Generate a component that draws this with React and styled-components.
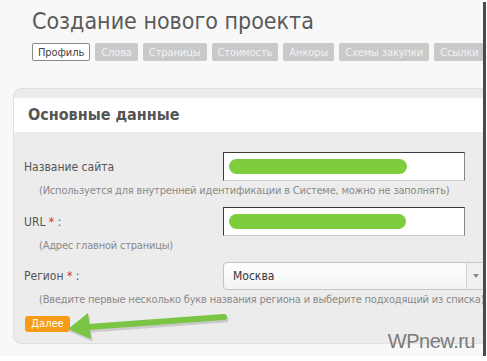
import React from 'react'
import styled, { createGlobalStyle } from 'styled-components'

const GlobalStyle = createGlobalStyle`
  html, body {
    margin: 0;
    padding: 0;
    background: #ffffff;
  }
  body {
    font-family: "DejaVu Sans Condensed", "DejaVu Sans", Verdana, sans-serif;
  }
`

const tabs = ['Слова', 'Страницы', 'Стоимость', 'Анкоры', 'Схемы закупки', 'Ссылки']

export default function App() {
  return (
    <>
      <GlobalStyle />
      <Frame>
        <Title>Создание нового проекта</Title>
        <Tabs>
          <Tab active>Профиль</Tab>
          {tabs.map(t => <Tab key={t}>{t}</Tab>)}
        </Tabs>

        <Panel>
          <PanelHead>Основные данные</PanelHead>
          <PanelBody>
            <Row>
              <Label>Название сайта</Label>
              <Input><Marker style={{width: 178}} /></Input>
            </Row>
            <Hint>(Используется для внутренней идентификации в Системе, можно не заполнять)</Hint>

            <Row>
              <Label>URL <Req>*</Req> :</Label>
              <Input><Marker style={{width: 177}} /></Input>
            </Row>
            <Hint>(Адрес главной страницы)</Hint>

            <Row>
              <Label>Регион <Req>*</Req> :</Label>
              <Select>
                <SelectValue>Москва</SelectValue>
                <SelectArrow><Caret /></SelectArrow>
              </Select>
            </Row>
            <Hint>(Введите первые несколько букв названия региона и выберите подходящий из списка)</Hint>

            <Button>Далее</Button>
          </PanelBody>
        </Panel>

        {/* annotation arrow drawn over the form */}
        <Pointer width="170" height="42" viewBox="0 0 170 42">
          <g transform="translate(1.5 2.5)" opacity="0.18" fill="#333" stroke="#333">
            <path d="M20 18 L156 8" strokeWidth="6" strokeLinecap="round" />
            <path d="M0 20 L20 4 L23 30 Z" stroke="none" />
          </g>
          <path d="M20 18 L156 8" stroke="#7bc545" strokeWidth="6" strokeLinecap="round" />
          <path d="M0 20 L20 4 L23 30 Z" fill="#7bc545" />
        </Pointer>

        <Watermark>WPnew.ru</Watermark>
      </Frame>
    </>
  )
}

const Frame = styled.div`
  position: relative;
  width: 483px;
  height: 356px;
  background: #f8f8f8;
  box-shadow: 3px 2px 0 #4a4a4a;
  overflow: hidden;
  padding-top: 7px;
  box-sizing: border-box;
`

const Title = styled.h1`
  margin: 0 0 0 32px;
  font-size: 23px;
  font-weight: normal;
  color: #5a5a5a;
  line-height: 28px;
`

const Tabs = styled.div`
  display: flex;
  gap: 5px;
  margin: 8px 0 0 32px;
  white-space: nowrap;
`

const Tab = styled.div`
  flex: none;
  height: 18px;
  line-height: 17px;
  padding: 0 5px;
  font-size: 11px;
  letter-spacing: -0.1px;
  border-radius: 2px;
  box-sizing: border-box;
  color: ${p => p.active ? '#444' : '#f2f2f2'};
  background: ${p => p.active ? '#ffffff' : '#c9c9c9'};
  border: 1px solid ${p => p.active ? '#8a8a8a' : '#c9c9c9'};
`

const Panel = styled.div`
  margin: 27px 0 0 13px;
  width: 490px;
  border: 1px solid #e0e0e0;
  border-radius: 8px;
  background: #ebebeb;
  padding-top: 9px;
`

const PanelHead = styled.div`
  background: #ffffff;
  height: 34px;
  line-height: 34px;
  padding-left: 14px;
  font-size: 16px;
  font-weight: bold;
  color: #555;
`

const PanelBody = styled.div`
  padding: 20px 0 11px 10px;
  background: #ececec;
  border-radius: 0 0 8px 8px;
`

const Row = styled.div`
  display: flex;
  align-items: center;
`

const Label = styled.div`
  width: 199px;
  font-size: 12px;
  color: #555;
`

const Req = styled.span`
  color: #e03030;
`

const Input = styled.div`
  width: 242px;
  height: 29px;
  box-sizing: border-box;
  background: #fff;
  border: 1px solid #3a3a3a;
  border-right-color: #888;
  border-bottom-color: #cfcfcf;
  display: flex;
  align-items: center;
  padding-left: 5px;
`

const Marker = styled.div`
  height: 15px;
  border-radius: 8px;
  background: #7dcd3d;
`

const Hint = styled.div`
  margin: 3px 0 10px 15px;
  font-size: 11px;
  letter-spacing: -0.2px;
  color: #8a8a8a;
  white-space: nowrap;
`

const Select = styled.div`
  width: 262px;
  height: 28px;
  box-sizing: border-box;
  border: 1px solid #c4c4c4;
  border-radius: 4px;
  background: linear-gradient(#fdfdfd, #f4f4f4);
  display: flex;
  align-items: stretch;
`

const SelectValue = styled.div`
  flex: 1;
  display: flex;
  align-items: center;
  padding-left: 9px;
  font-size: 12px;
  color: #333;
`

const SelectArrow = styled.div`
  width: 17px;
  flex: none;
  border-left: 1px solid #d0d0d0;
  background: #f0f0f0;
  display: flex;
  align-items: center;
  justify-content: center;
`

const Caret = styled.span`
  width: 0;
  height: 0;
  border-left: 3px solid transparent;
  border-right: 3px solid transparent;
  border-top: 4px solid #888;
`

const Button = styled.div`
  margin-left: 1px;
  width: 45px;
  height: 16px;
  line-height: 16px;
  border-radius: 3px;
  background: #f59b17;
  color: #fff;
  font-size: 11px;
  text-align: center;
`

const Pointer = styled.svg`
  position: absolute;
  left: 68px;
  top: 309px;
`

const Watermark = styled.div`
  position: absolute;
  right: 8px;
  bottom: 3px;
  font-family: "Liberation Sans", Arial, sans-serif;
  font-size: 20px;
  letter-spacing: -0.5px;
  color: #7a7a7a;
`
